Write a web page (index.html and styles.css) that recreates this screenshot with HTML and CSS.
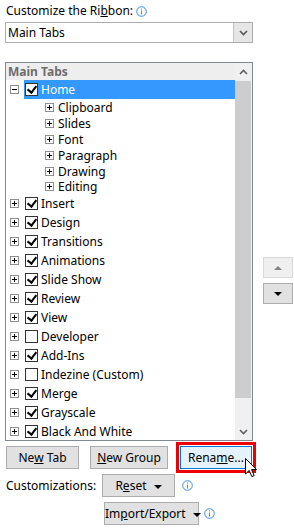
FILE: index.html
```html
<!DOCTYPE html>
<html lang="en">
<head>
    <meta charset="UTF-8">
    <title>Customize the Ribbon</title>
    <link rel="stylesheet" href="styles.css">
</head>
<body>
    <div class="panel">
        <div class="caption">
            <span>Customize the Ri<u>b</u>bon:</span>
            <svg class="info" width="11" height="11" viewBox="0 0 11 11"><circle cx="5.5" cy="5.5" r="4.8" fill="none" stroke="#3c8ee3"/><rect x="5" y="2.5" width="1" height="1" fill="#3c8ee3"/><rect x="5" y="4.5" width="1" height="4" fill="#3c8ee3"/></svg>
        </div>

        <div class="select">
            <span class="select-text">Main Tabs</span>
            <span class="select-btn">
                <svg width="9" height="6" viewBox="0 0 9 6"><polyline points="1,1 4.5,4.5 8,1" fill="none" stroke="#555" stroke-width="1.6"/></svg>
            </span>
        </div>

        <div class="middle">
            <div class="listbox">
                <div class="tree">
                    <div class="group-head">Main Tabs</div>

                    <div class="row top">
                        <span class="exp minus"></span>
                        <span class="item selected"><span class="check on"></span><span class="label">Home</span></span>
                    </div>
                    <div class="row sub"><span class="exp"></span><span class="label">Clipboard</span></div>
                    <div class="row sub"><span class="exp"></span><span class="label">Slides</span></div>
                    <div class="row sub"><span class="exp"></span><span class="label">Font</span></div>
                    <div class="row sub"><span class="exp"></span><span class="label">Paragraph</span></div>
                    <div class="row sub"><span class="exp"></span><span class="label">Drawing</span></div>
                    <div class="row sub last"><span class="exp"></span><span class="label">Editing</span></div>

                    <div class="row top"><span class="exp"></span><span class="item"><span class="check on"></span><span class="label">Insert</span></span></div>
                    <div class="row top"><span class="exp"></span><span class="item"><span class="check on"></span><span class="label">Design</span></span></div>
                    <div class="row top"><span class="exp"></span><span class="item"><span class="check on"></span><span class="label">Transitions</span></span></div>
                    <div class="row top"><span class="exp"></span><span class="item"><span class="check on"></span><span class="label">Animations</span></span></div>
                    <div class="row top"><span class="exp"></span><span class="item"><span class="check on"></span><span class="label">Slide Show</span></span></div>
                    <div class="row top"><span class="exp"></span><span class="item"><span class="check on"></span><span class="label">Review</span></span></div>
                    <div class="row top"><span class="exp"></span><span class="item"><span class="check on"></span><span class="label">View</span></span></div>
                    <div class="row top"><span class="exp"></span><span class="item"><span class="check"></span><span class="label">Developer</span></span></div>
                    <div class="row top"><span class="exp"></span><span class="item"><span class="check on"></span><span class="label">Add-Ins</span></span></div>
                    <div class="row top"><span class="exp"></span><span class="item"><span class="check"></span><span class="label">Indezine (Custom)</span></span></div>
                    <div class="row top"><span class="exp"></span><span class="item"><span class="check on"></span><span class="label">Merge</span></span></div>
                    <div class="row top"><span class="exp"></span><span class="item"><span class="check on"></span><span class="label">Grayscale</span></span></div>
                    <div class="row top"><span class="exp"></span><span class="item"><span class="check on"></span><span class="label">Black And White</span></span></div>
                </div>

                <div class="scrollbar">
                    <div class="sb-arrow">
                        <svg width="9" height="6" viewBox="0 0 9 6"><polyline points="1,5 4.5,1.5 8,5" fill="none" stroke="#606060" stroke-width="1.6"/></svg>
                    </div>
                    <div class="sb-thumb"></div>
                    <div class="sb-arrow">
                        <svg width="9" height="6" viewBox="0 0 9 6"><polyline points="1,1 4.5,4.5 8,1" fill="none" stroke="#606060" stroke-width="1.6"/></svg>
                    </div>
                </div>
            </div>

            <div class="movers">
                <button class="mover" disabled><span class="tri up"></span></button>
                <button class="mover"><span class="tri down"></span></button>
            </div>
        </div>

        <div class="actions">
            <button class="btn new-tab">Ne<u>w</u> Tab</button>
            <button class="btn new-group"><u>N</u>ew Group</button>
            <div class="highlight">
                <button class="btn rename">Rena<u>m</u>e...</button>
            </div>
        </div>

        <div class="custom-row">
            <span class="custom-label">Customizations:</span>
            <button class="btn menu reset">R<u>e</u>set <span class="tri down"></span></button>
            <svg class="info" width="11" height="11" viewBox="0 0 11 11"><circle cx="5.5" cy="5.5" r="4.8" fill="none" stroke="#3c8ee3"/><rect x="5" y="2.5" width="1" height="1" fill="#3c8ee3"/><rect x="5" y="4.5" width="1" height="4" fill="#3c8ee3"/></svg>
        </div>

        <div class="custom-row second">
            <button class="btn menu import">Im<u>p</u>ort/Export <span class="tri down"></span></button>
            <svg class="info" width="11" height="11" viewBox="0 0 11 11"><circle cx="5.5" cy="5.5" r="4.8" fill="none" stroke="#3c8ee3"/><rect x="5" y="2.5" width="1" height="1" fill="#3c8ee3"/><rect x="5" y="4.5" width="1" height="4" fill="#3c8ee3"/></svg>
        </div>

        <!-- mouse pointer over the Rename button -->
        <svg class="cursor" width="13" height="20" viewBox="0 0 13 20"><path d="M0.5,0.5 L0.5,16 L4.2,12.4 L6.8,18.6 L9.2,17.6 L6.6,11.6 L11.5,11.6 Z" fill="#fff" stroke="#000" stroke-width="1" stroke-linejoin="round"/></svg>
    </div>
</body>
</html>
```

FILE: styles.css
```css
body {
    margin: 0;
    font-family: "Segoe UI", "Noto Sans", sans-serif;
    font-size: 12px;
    color: #000;
    background: #fff;
}

.panel {
    position: relative;
    padding: 3px 0 0 5px;
}

.caption {
    display: flex;
    align-items: center;
    gap: 3px;
    height: 16px;
    line-height: 16px;
    padding-left: 1px;
}

.info {
    display: block;
    flex: none;
}

/* dropdown */
.select {
    display: flex;
    align-items: stretch;
    box-sizing: border-box;
    width: 248px;
    height: 21px;
    margin-top: 3px;
    border: 1px solid #acacac;
}

.select-text {
    flex: 1;
    padding-left: 2px;
    line-height: 19px;
}

.select-btn {
    display: flex;
    align-items: center;
    justify-content: center;
    width: 18px;
    background: #e6e6e6;
    border-left: 1px solid #c4c4c4;
}

/* list + movers */
.middle {
    display: flex;
    margin-top: 19px;
}

.listbox {
    display: flex;
    box-sizing: border-box;
    width: 248px;
    height: 379px;
    border: 1px solid #828790;
    overflow: hidden;
}

.tree {
    flex: 1;
    overflow: hidden;
}

.group-head {
    height: 17px;
    line-height: 17px;
    padding-left: 2px;
    background: #eeeeee;
    color: #6d6d6d;
    font-weight: bold;
}

.row {
    display: flex;
    align-items: center;
}

.row.top {
    height: 19px;
    padding-left: 4px;
}

.row.sub {
    height: 16px;
    padding-left: 39px;
}

.row.sub.last {
    height: 15px;
}

.exp {
    position: relative;
    flex: none;
    box-sizing: border-box;
    width: 9px;
    height: 9px;
    border: 1px solid #8f8f8f;
    background: #fff;
}

.exp::before,
.exp::after {
    content: "";
    position: absolute;
    background: #000;
}

.exp::before {
    left: 1px;
    top: 3px;
    width: 5px;
    height: 1px;
}

.exp::after {
    left: 3px;
    top: 1px;
    width: 1px;
    height: 5px;
}

.exp.minus::after {
    display: none;
}

.item {
    display: flex;
    align-items: center;
    align-self: stretch;
    flex: 1;
    margin-left: 5px;
    padding-left: 1px;
}

.item.selected {
    background: #3399ff;
    color: #fff;
}

.check {
    position: relative;
    flex: none;
    box-sizing: border-box;
    width: 13px;
    height: 13px;
    border: 1px solid #333;
    background: #fff;
}

.check.on::after {
    content: "";
    position: absolute;
    left: 3px;
    top: 0px;
    width: 4px;
    height: 7px;
    border: solid #000;
    border-width: 0 2px 2px 0;
    transform: rotate(38deg);
}

.row.top .label {
    margin-left: 3px;
}

.row.sub .label {
    margin-left: 4px;
}

/* scrollbar */
.scrollbar {
    display: flex;
    flex-direction: column;
    width: 17px;
    background: #f0f0f0;
}

.sb-arrow {
    display: flex;
    align-items: center;
    justify-content: center;
    height: 17px;
    flex: none;
}

.sb-thumb {
    height: 317px;
    margin: 1px 1px 0 0;
    background: #cdcdcd;
}

.scrollbar .sb-arrow:last-child {
    margin-top: auto;
}

.movers {
    display: flex;
    flex-direction: column;
    gap: 5px;
    margin-left: 10px;
    padding-top: 195px;
}

.mover {
    display: flex;
    align-items: center;
    justify-content: center;
    box-sizing: border-box;
    width: 30px;
    height: 21px;
    padding: 0;
    border: 1px solid #adadad;
    background: #e1e1e1;
}

.mover:disabled {
    border-color: #d9d9d9;
    background: #efefef;
}

.tri {
    display: inline-block;
    width: 0;
    height: 0;
    border-left: 4px solid transparent;
    border-right: 4px solid transparent;
}

.tri.down {
    border-top: 4px solid #000;
}

.tri.up {
    border-bottom: 4px solid #838383;
}

/* buttons */
.btn {
    box-sizing: border-box;
    height: 23px;
    padding: 0;
    border: 1px solid #adadad;
    background: #e1e1e1;
    font-family: inherit;
    font-size: 12px;
    color: #000;
    white-space: nowrap;
}

.actions {
    display: flex;
    align-items: center;
    margin-top: 1px;
    padding-left: 1px;
}

.new-tab {
    width: 73px;
}

.new-group {
    width: 78px;
    margin-left: 11px;
}

.highlight {
    margin-left: 8px;
    padding: 1px;
    border: 3px solid #ee0000;
}

.rename {
    display: block;
    width: 72px;
    border-color: #0078d7;
    background: #e5f1fb;
}

.custom-row {
    display: flex;
    align-items: center;
    margin-top: 1px;
    padding-left: 1px;
}

.custom-row.second {
    margin-top: 5px;
    padding-left: 99px;
}

.custom-label {
    width: 96px;
}

.menu .tri {
    margin-left: 4px;
    vertical-align: middle;
}

.reset {
    width: 73px;
}

.import {
    width: 95px;
}

.custom-row .info {
    margin-left: 7px;
}

.import + .info {
    margin-left: 5px;
}

.cursor {
    position: absolute;
    left: 245px;
    top: 458px;
}
```
